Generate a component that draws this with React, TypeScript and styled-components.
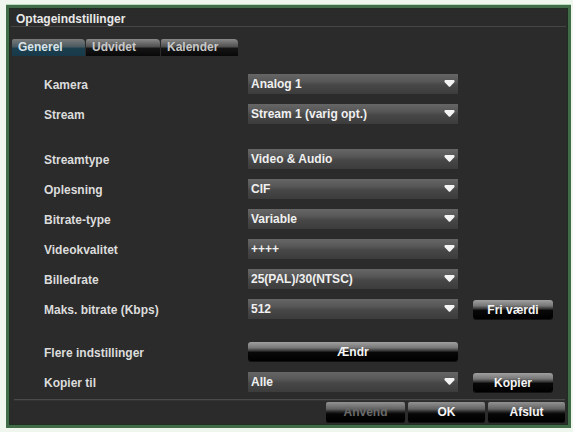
import React from "react";
import styled, { createGlobalStyle, css } from "styled-components";

const Global = createGlobalStyle`
  html, body { margin: 0; padding: 0; background: #eef6ee; }
  body { font-family: "Liberation Sans", Arial, sans-serif; }
  * { box-sizing: border-box; }
`;

const Dialog = styled.div`
  margin: 5px 0 0 6px;
  width: 565px;
  height: 423px;
  border: 3px solid #416c48;
  box-shadow: inset 0 0 0 1px #1e2e20, 0 -1px 0 #b9dcb9;
  background: #2b2b2b;
  display: flex;
  flex-direction: column;
  color: #e6e6e6;
  font-size: 12px;
  font-weight: bold;
`;

const TitleBar = styled.div`
  height: 19px;
  padding: 4px 0 0 5px;
  line-height: 14px;
  color: #e8e8e8;
  border-bottom: 1px solid #464646;
  margin: 0 2px;
`;

const TabRow = styled.div`
  display: flex;
  gap: 1px;
  margin: 12px 0 0 3px;
  height: 17px;
`;

const Tab = styled.div<{ $active?: boolean; $w: number }>`
  width: ${(p) => p.$w}px;
  height: 17px;
  padding: 2px 0 0 6px;
  line-height: 13px;
  border-radius: 2px 4px 0 0;
  color: ${(p) => (p.$active ? "#d8e4ea" : "#c8c8c8")};
  background: ${(p) =>
    p.$active
      ? "linear-gradient(#7a7a7a 0%, #4a5a60 45%, #1c3f4e 55%, #17394a 100%)"
      : "linear-gradient(#8a8a8a 0%, #505050 45%, #151515 55%, #080808 100%)"};
`;

const Body = styled.div`
  margin-top: 18px;
  padding-left: 35px;
  display: flex;
  flex-direction: column;
`;

const Section = styled.div<{ $gapBefore?: number }>`
  display: grid;
  grid-template-columns: 204px 210px 15px 80px;
  row-gap: 10px;
  grid-auto-rows: 20px;
  margin-top: ${(p) => p.$gapBefore ?? 0}px;
`;

const Label = styled.div`
  grid-column: 1;
  line-height: 20px;
  color: #dcdcdc;
  padding-top: 1px;
`;

const Select = styled.div`
  grid-column: 2;
  height: 20px;
  display: flex;
  align-items: center;
  justify-content: space-between;
  padding: 0 3px 0 3px;
  color: #f0f0f0;
  background: linear-gradient(#666 0%, #585858 35%, #474747 55%, #3c3c3c 100%);
`;

const buttonLook = css`
  border: none;
  border-radius: 3px;
  color: #f4f4f4;
  font-family: "Liberation Sans", Arial, sans-serif;
  font-size: 12px;
  font-weight: bold;
  padding: 0;
  background: linear-gradient(#a0a0a0 0%, #787878 30%, #3a3a3a 45%, #080808 55%, #000 100%);
  box-shadow: 0 1px 0 #111;
`;

const SideButton = styled.button`
  ${buttonLook};
  grid-column: 4;
  height: 19px;
  margin-top: 1px;
`;

const WideButton = styled.button`
  ${buttonLook};
  grid-column: 2;
  height: 19px;
`;

const Separator = styled.div`
  margin: 7px 3px 0 5px;
  height: 2px;
  background: #4a4a4a;
  border-bottom: 1px solid #333;
`;

const Footer = styled.div`
  display: flex;
  justify-content: flex-end;
  gap: 3px;
  margin-top: 1px;
  padding-right: 3px;
`;

const FooterButton = styled.button<{ $disabled?: boolean; $w: number }>`
  ${buttonLook};
  width: ${(p) => p.$w}px;
  height: 20px;
  border-radius: 2px;
  color: ${(p) => (p.$disabled ? "#6a6a6a" : "#f4f4f4")};
  background: linear-gradient(#929292 0%, #626262 35%, #222 50%, #060606 60%, #000 100%);
`;

const Arrow = () => (
  <svg width="11" height="8" viewBox="0 0 11 8">
    <path d="M0.5 1 Q0.5 0 1.5 0 H9.5 Q10.5 0 10.5 1 V2 L6.5 6.2 Q5.5 7.4 4.5 6.2 L0.5 2 Z" fill="#f4f4f4" />
  </svg>
);

const Dropdown = ({ value }: { value: string }) => (
  <Select>
    <span>{value}</span>
    <Arrow />
  </Select>
);

type Row = { label: string; value: string; side?: string };

const top: Row[] = [
  { label: "Kamera", value: "Analog 1" },
  { label: "Stream", value: "Stream 1 (varig opt.)" },
];

const mid: Row[] = [
  { label: "Streamtype", value: "Video & Audio" },
  { label: "Oplesning", value: "CIF" },
  { label: "Bitrate-type", value: "Variable" },
  { label: "Videokvalitet", value: "++++" },
  { label: "Billedrate", value: "25(PAL)/30(NTSC)" },
  { label: "Maks. bitrate (Kbps)", value: "512", side: "Fri værdi" },
];

const renderRow = (r: Row) => (
  <React.Fragment key={r.label}>
    <Label>{r.label}</Label>
    <Dropdown value={r.value} />
    {r.side && <SideButton>{r.side}</SideButton>}
  </React.Fragment>
);

export default function App() {
  return (
    <>
      <Global />
      <Dialog>
        <TitleBar>Optageindstillinger</TitleBar>
        <TabRow>
          <Tab $active $w={73}>Generel</Tab>
          <Tab $w={74}>Udvidet</Tab>
          <Tab $w={77}>Kalender</Tab>
        </TabRow>
        <Body>
          <Section>{top.map(renderRow)}</Section>
          <Section $gapBefore={25}>{mid.map(renderRow)}</Section>
          <Section $gapBefore={23}>
            <Label>Flere indstillinger</Label>
            <WideButton>Ændr</WideButton>
            <Label>Kopier til</Label>
            <Dropdown value="Alle" />
            <SideButton>Kopier</SideButton>
          </Section>
        </Body>
        <Separator />
        <Footer>
          <FooterButton $disabled $w={79}>Anvend</FooterButton>
          <FooterButton $w={77}>OK</FooterButton>
          <FooterButton $w={77}>Afslut</FooterButton>
        </Footer>
      </Dialog>
    </>
  );
}
